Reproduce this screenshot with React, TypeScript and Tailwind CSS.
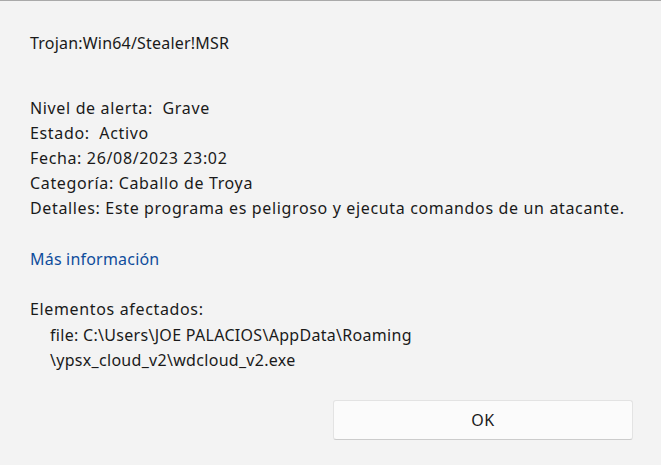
export default function App() {
  return (
    <div className="flex h-[465px] w-[661px] flex-col border-t border-[#a9a9a9] bg-[#f3f3f3] font-['Noto_Sans',sans-serif] text-[16px] leading-[25px] tracking-[0.65px] text-[#1a1a1a]">
      <div className="px-[30px] pt-[30px]">
        <p className="tracking-[0.2px]">Trojan:Win64/Stealer!MSR</p>

        <div className="mt-[40px]">
          <p>Nivel de alerta:&nbsp; Grave</p>
          <p>Estado:&nbsp; Activo</p>
          <p>Fecha: 26/08/2023 23:02</p>
          <p>Categoría: Caballo de Troya</p>
          <p>Detalles: Este programa es peligroso y ejecuta comandos de un atacante.</p>
        </div>

        <a href="#" className="mt-[26px] block tracking-[0.2px] text-[#0f4d9c]">
          Más información
        </a>

        <div className="mt-[25px]">
          <p>Elementos afectados:</p>
          <div className="pl-[20px] pt-[1px] tracking-[0.3px]">
            <p>file: C:\Users\JOE PALACIOS\AppData\Roaming</p>
            <p>\ypsx_cloud_v2\wdcloud_v2.exe</p>
          </div>
        </div>
      </div>

      <div className="mt-[27px] flex justify-end pr-[28px]">
        <button
          type="button"
          className="h-[40px] w-[300px] rounded-[3px] border border-[#e3e3e3] border-b-[#cccccc] bg-[#fbfbfb] text-[16px] text-[#1a1a1a]"
        >
          OK
        </button>
      </div>
    </div>
  );
}
